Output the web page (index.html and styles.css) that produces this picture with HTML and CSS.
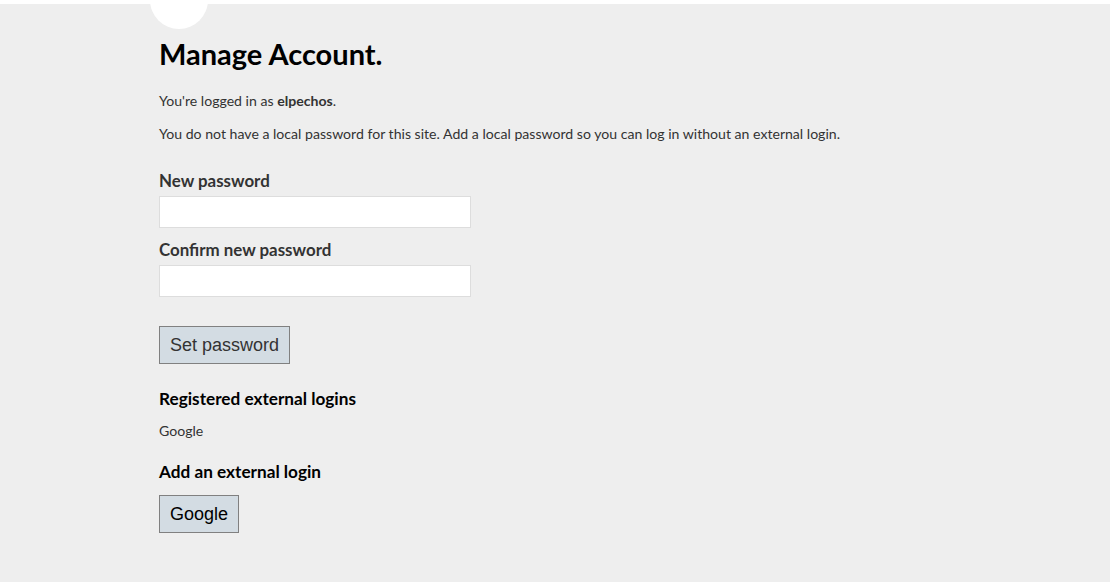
FILE: index.html
```html
<!DOCTYPE html>
<html lang="en">
<head>
<meta charset="utf-8">
<title>Manage Account</title>
<link rel="stylesheet" href="styles.css">
</head>
<body>
<div class="page">
  <div class="logo-dot"></div>
  <main class="content">
    <h1 class="title">Manage Account.</h1>
    <p class="text first">You're logged in as <strong>elpechos</strong>.</p>
    <p class="text second">You do not have a local password for this site. Add a local password so you can log in without an external login.</p>
    <form class="form">
      <label class="label" for="np">New password</label>
      <input class="field" id="np" type="password">
      <label class="label second-label" for="cp">Confirm new password</label>
      <input class="field" id="cp" type="password">
      <button class="btn set" type="button">Set password</button>
    </form>
    <h3 class="subhead reg">Registered external logins</h3>
    <p class="text provider">Google</p>
    <h3 class="subhead add">Add an external login</h3>
    <div class="actions"><button class="btn google" type="button">Google</button></div>
  </main>
</div>
</body>
</html>
```
FILE: styles.css
```css
html, body {
  margin: 0;
  padding: 0;
  background: #ffffff;
}
body {
  font-family: Lato, "Open Sans", sans-serif;
  color: #333333;
}
.page {
  position: relative;
  margin-top: 4px;
  background: #eeeeee;
  min-height: 578px;
  overflow: hidden;
}
.logo-dot {
  position: absolute;
  left: 150px;
  top: -33px;
  width: 58px;
  height: 58px;
  border-radius: 50%;
  background: #ffffff;
}
.content {
  display: flex;
  flex-direction: column;
  align-items: flex-start;
  padding: 34px 0 0 159px;
}
.title {
  margin: 0;
  font-size: 29px;
  line-height: 32px;
  font-weight: 700;
  color: #000000;
}
.text {
  margin: 0;
  font-size: 14.1px;
  line-height: 18px;
}
.text strong { font-weight: 700; }
.first { margin-top: 22px; }
.second { margin-top: 15px; }
.form {
  display: flex;
  flex-direction: column;
  align-items: flex-start;
  margin-top: 29px;
}
.label {
  font-size: 16.9px;
  line-height: 18px;
  font-weight: 700;
  color: #333333;
}
.second-label { margin-top: 13px; }
.field {
  box-sizing: border-box;
  margin: 6px 0 0 0;
  width: 312px;
  height: 32px;
  border: 1px solid #dddddd;
  background: #ffffff;
  padding: 4px 8px;
  outline: none;
}
.btn {
  box-sizing: border-box;
  height: 38px;
  padding: 0 10px;
  background: #d3dce3;
  border: 1px solid #808080;
  font-family: "Liberation Sans", Arial, sans-serif;
  font-size: 18px;
  white-space: nowrap;
  cursor: pointer;
}
.set {
  margin-top: 29px;
  color: #333333;
  min-width: 131px;
}
.subhead {
  margin: 0;
  font-size: 17.2px;
  line-height: 20px;
  font-weight: 700;
  color: #000000;
}
.reg { margin-top: 25px; }
.provider { margin-top: 13px; }
.add { margin-top: 22px; }
.actions { margin-top: 13px; }
.google {
  color: #000000;
  min-width: 80px;
}
```
